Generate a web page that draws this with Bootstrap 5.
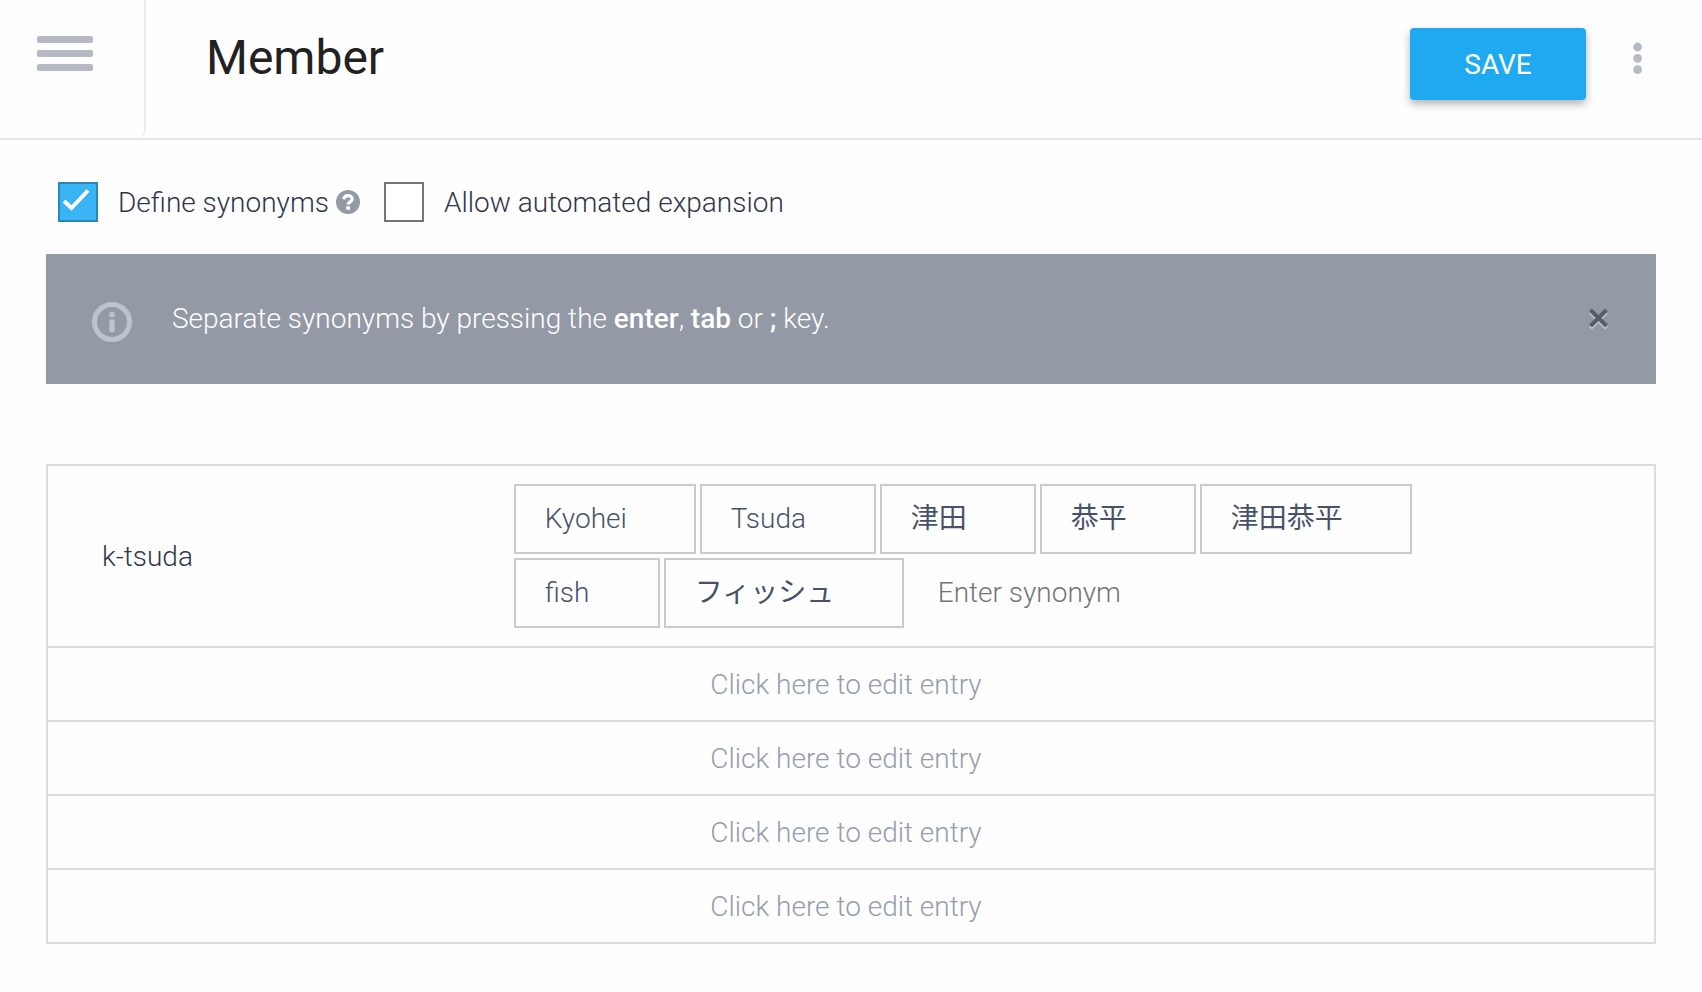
<!DOCTYPE html>
<html lang="en">
<head>
<meta charset="utf-8">
<meta name="viewport" content="width=device-width, initial-scale=1">
<title>Member</title>
<link href="https://cdn.jsdelivr.net/npm/bootstrap@5.3.0/dist/css/bootstrap.min.css" rel="stylesheet">
<style>
  body {
    background: #fefefe;
    color: #31364a;
    font-family: Roboto, "Noto Sans CJK JP", sans-serif;
    font-size: 28px;
    font-weight: 300;
    line-height: 36px;
  }
  .topbar { min-height: 140px; border-bottom: 2px solid #e5e5e5; }
  .menu-cell {
    width: 146px;
    padding: 36px 0 0 37px;
    border-right: 2px solid #ededed;
    border-bottom-right-radius: 8px;
  }
  .plain-btn { display: block; padding: 0; border: 0; background: none; color: inherit; line-height: 0; }
  .topbar h1 { margin: 0; padding: 30px 0 0 60px; color: #212121; font-size: 48px; font-weight: 400; line-height: 56px; }
  .topbar-actions { padding: 28px 56px 0 0; gap: 47px; }
  .btn-save {
    --bs-btn-color: #fff;
    --bs-btn-bg: #1ea9f1;
    --bs-btn-hover-color: #fff;
    --bs-btn-hover-bg: #1598dc;
    --bs-btn-border-width: 0;
    --bs-btn-border-radius: 4px;
    --bs-btn-font-size: 28px;
    --bs-btn-font-weight: 400;
    --bs-btn-line-height: 36px;
    width: 176px;
    height: 72px;
    padding: 2px 0 0;
    box-shadow: 0 4px 8px rgba(0, 0, 0, .3);
  }
  .more-btn { margin-top: 14px; }
  .page { padding: 42px 46px 48px; }
  .options { padding-left: 12px; gap: 24px; }
  .options label { padding-top: 2px; }
  .options .form-check-input {
    width: 40px;
    height: 40px;
    margin: 0 20px 0 0;
    border: 2px solid #757575;
    border-radius: 0;
    background-color: #fff;
  }
  .options .form-check-input:checked {
    border-color: #2a87b9;
    background-color: #3bb4f5;
    background-image: url("data:image/svg+xml,%3Csvg xmlns='http://www.w3.org/2000/svg' viewBox='0 0 36 36'%3E%3Cpath d='M4 17l7.500 7L28 6.500' fill='none' stroke='%23fff' stroke-width='4'/%3E%3C/svg%3E");
  }
  .help-btn { margin-left: 7px; }
  .notice {
    margin: 32px 0 80px;
    padding: 0 46px;
    min-height: 130px;
    border: 0;
    border-radius: 0;
    background: #9399a5;
    color: #fff;
  }
  .notice p { margin: 0 0 0 40px; }
  .notice strong { font-weight: 500; }
  .notice-icon { margin-top: 6px; }
  .entry-table { --bs-table-bg: transparent; border: 2px solid #dcdcdc; border-collapse: separate; border-spacing: 0; color: inherit; }
  .entry-table > tbody > tr > td { padding: 0; border: 0 solid #dcdcdc; color: inherit; }
  .entry-table > tbody > tr + tr > td { border-top-width: 2px; }
  .entry-table > tbody > tr > .entry-name { width: 29%; padding: 2px 0 0 54px; }
  .synonyms { gap: 4px; width: 88%; padding: 18px 0; }
  .synonym { height: 70px; padding: 15px 0 0 29px; border: 2px solid #cacacf; color: #475269; }
  .synonym:lang(ja) { font-weight: 400; }
  .synonym-input { width: 280px; height: 70px; padding: 0 0 2px 30px; border: 0; background: none; color: #475269; font-weight: 300; outline: 0; }
  .synonym-input::placeholder { color: #757575; opacity: 1; }
  .edit-entry { display: block; width: 100%; height: 72px; padding: 2px 10px 0 0; border: 0; background: none; color: #969cb0; font-weight: 300; }
</style>
</head>
<body>
<header class="topbar d-flex align-items-stretch">
  <div class="menu-cell flex-shrink-0">
    <button class="plain-btn" type="button" aria-label="Open menu">
      <svg width="56" height="35" viewBox="0 0 56 35" fill="#b5bac5"><rect width="56" height="7" rx="2"/><rect y="14" width="56" height="7" rx="2"/><rect y="28" width="56" height="7" rx="2"/></svg>
    </button>
  </div>
  <h1 class="flex-grow-1">Member</h1>
  <div class="topbar-actions d-flex align-items-start">
    <button class="btn btn-save" type="button">SAVE</button>
    <button class="plain-btn more-btn" type="button" aria-label="More actions">
      <svg width="13" height="32" viewBox="0 0 13 32" fill="#b5bac5"><circle cx="4.600" cy="5" r="4.400"/><circle cx="4.600" cy="16.300" r="4.400"/><circle cx="4.600" cy="27.600" r="4.400"/></svg>
    </button>
  </div>
</header>

<main class="page">
  <div class="options d-flex flex-wrap align-items-center">
    <div class="d-flex align-items-center">
      <input class="form-check-input" type="checkbox" id="define" checked>
      <label for="define">Define synonyms</label>
      <button class="plain-btn help-btn" type="button" aria-label="About synonyms">
        <svg width="24" height="24" viewBox="0 0 24 24"><circle cx="12" cy="12" r="12" fill="#9399a5"/><path d="M7.800 9.300C8.200 6.700 9.800 5.600 12 5.600c2.300 0 4.200 1.300 4.200 3.400 0 2.900-3.900 2.900-3.900 5.400" fill="none" stroke="#fff" stroke-width="3.300"/><rect x="10.300" y="16.200" width="3.700" height="3.600" rx=".5" fill="#fff"/></svg>
      </button>
    </div>
    <div class="d-flex align-items-center">
      <input class="form-check-input" type="checkbox" id="expand">
      <label for="expand">Allow automated expansion</label>
    </div>
  </div>

  <div class="alert notice d-flex align-items-center" role="alert">
    <svg class="notice-icon flex-shrink-0" width="40" height="40" viewBox="0 0 40 40"><circle cx="20" cy="20" r="17.500" fill="none" stroke="#bec2cc" stroke-width="5"/><rect x="17.300" y="10" width="5.400" height="5" rx="1.500" fill="#bec2cc"/><rect x="17.300" y="17.300" width="5.400" height="13" rx="1.500" fill="#bec2cc"/></svg>
    <p class="flex-grow-1">Separate synonyms by pressing the <strong>enter</strong>, <strong>tab</strong> or <strong>;</strong> key.</p>
    <button class="plain-btn" type="button" data-bs-dismiss="alert" aria-label="Close">
      <svg width="22" height="22" viewBox="0 0 22 22" fill="none" stroke-width="4"><path d="M2.500 4l16 16M18.500 4l-16 16" stroke="#c5c9d0"/><path d="M2.500 2l16 16M18.500 2l-16 16" stroke="#595d65"/></svg>
    </button>
  </div>

  <table class="table entry-table align-middle mb-0">
    <tbody>
      <tr>
        <td class="entry-name">k-tsuda</td>
        <td>
          <div class="synonyms d-flex flex-wrap">
            <span class="synonym" style="width:182px">Kyohei</span>
            <span class="synonym" style="width:176px">Tsuda</span>
            <span class="synonym" lang="ja" style="width:156px">津田</span>
            <span class="synonym" lang="ja" style="width:156px">恭平</span>
            <span class="synonym" lang="ja" style="width:212px">津田恭平</span>
            <span class="synonym" style="width:146px">fish</span>
            <span class="synonym" lang="ja" style="width:240px">フィッシュ</span>
            <input class="synonym-input" type="text" placeholder="Enter synonym" aria-label="Enter synonym">
          </div>
        </td>
      </tr>
      <tr><td colspan="2"><button class="edit-entry" type="button">Click here to edit entry</button></td></tr>
      <tr><td colspan="2"><button class="edit-entry" type="button">Click here to edit entry</button></td></tr>
      <tr><td colspan="2"><button class="edit-entry" type="button">Click here to edit entry</button></td></tr>
      <tr><td colspan="2"><button class="edit-entry" type="button">Click here to edit entry</button></td></tr>
    </tbody>
  </table>
</main>
<script src="https://cdn.jsdelivr.net/npm/bootstrap@5.3.0/dist/js/bootstrap.bundle.min.js"></script>
</body>
</html>
